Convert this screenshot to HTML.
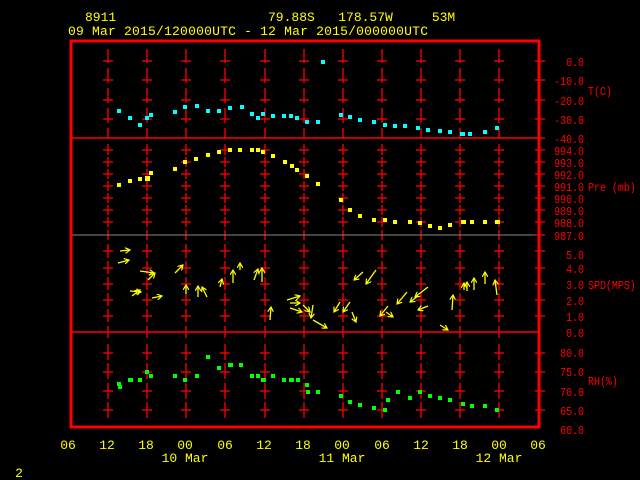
<!DOCTYPE html>
<html><head><meta charset="utf-8"><style>
html,body{margin:0;padding:0;background:#000;width:640px;height:480px;overflow:hidden}
svg{display:block}
text{font-family:"Liberation Mono",monospace;font-size:13px}
.s text{font-size:12px}
</style></head><body>
<svg width="640" height="480" viewBox="0 0 640 480" xmlns="http://www.w3.org/2000/svg">
<defs>
<marker id="ah" markerWidth="6" markerHeight="6" refX="5" refY="3" orient="auto" markerUnits="userSpaceOnUse">
<path d="M0,0 L5,3 L0,6" fill="none" stroke="#ff0" stroke-width="1.2"/></marker>
<g id="col" stroke="#f00" stroke-width="1.3">
<line x1="0" y1="49" x2="0" y2="63"/><line x1="0" y1="68" x2="0" y2="83"/><line x1="0" y1="88" x2="0" y2="103"/><line x1="0" y1="108" x2="0" y2="123"/><line x1="0" y1="128" x2="0" y2="138"/>
<line x1="-5" y1="61" x2="5" y2="61"/><line x1="-5" y1="80" x2="5" y2="80"/><line x1="-5" y1="100" x2="5" y2="100"/><line x1="-5" y1="119" x2="5" y2="119"/>
<line x1="0" y1="144" x2="0" y2="155"/><line x1="0" y1="157" x2="0" y2="167"/><line x1="0" y1="169" x2="0" y2="179"/><line x1="0" y1="181" x2="0" y2="191"/><line x1="0" y1="193" x2="0" y2="203"/><line x1="0" y1="205" x2="0" y2="215"/><line x1="0" y1="217" x2="0" y2="227"/><line x1="0" y1="230" x2="0" y2="235"/>
<line x1="-5" y1="150" x2="5" y2="150"/><line x1="-5" y1="162" x2="5" y2="162"/><line x1="-5" y1="174" x2="5" y2="174"/><line x1="-5" y1="186" x2="5" y2="186"/><line x1="-5" y1="198" x2="5" y2="198"/><line x1="-5" y1="210" x2="5" y2="210"/><line x1="-5" y1="222" x2="5" y2="222"/>
<line x1="0" y1="235" x2="0" y2="240"/><line x1="0" y1="244" x2="0" y2="258"/><line x1="0" y1="261" x2="0" y2="274"/><line x1="0" y1="277" x2="0" y2="290"/><line x1="0" y1="293" x2="0" y2="306"/><line x1="0" y1="309" x2="0" y2="322"/><line x1="0" y1="326" x2="0" y2="332"/>
<line x1="-5" y1="251" x2="5" y2="251"/><line x1="-5" y1="268" x2="5" y2="268"/><line x1="-5" y1="284" x2="5" y2="284"/><line x1="-5" y1="300" x2="5" y2="300"/><line x1="-5" y1="316" x2="5" y2="316"/>
<line x1="0" y1="332" x2="0" y2="338"/><line x1="0" y1="344" x2="0" y2="360"/><line x1="0" y1="363" x2="0" y2="379"/><line x1="0" y1="383" x2="0" y2="399"/><line x1="0" y1="402" x2="0" y2="418"/>
<line x1="-5" y1="353" x2="5" y2="353"/><line x1="-5" y1="372" x2="5" y2="372"/><line x1="-5" y1="391" x2="5" y2="391"/><line x1="-5" y1="410" x2="5" y2="410"/>
</g>
</defs>
<g fill="#ff0">
<text x="85" y="21">8911</text>
<text x="268" y="21" xml:space="preserve">79.88S   178.57W     53M</text>
<text x="68" y="35" textLength="360">09 Mar 2015/120000UTC - 12 Mar 2015/000000UTC</text>
</g>
<use href="#col" x="108"/><use href="#col" x="147"/><use href="#col" x="186"/><use href="#col" x="225"/><use href="#col" x="265"/><use href="#col" x="304"/><use href="#col" x="343"/><use href="#col" x="382"/><use href="#col" x="421"/><use href="#col" x="460"/><use href="#col" x="499"/>
<g stroke="#f00" stroke-width="1.5">
<line x1="70" y1="138" x2="540" y2="138"/>
<line x1="70" y1="332" x2="540" y2="332"/>
</g>
<line x1="70" y1="235" x2="540" y2="235" stroke="#888" stroke-width="1"/>
<rect x="71" y="41" width="468" height="386" fill="none" stroke="#f00" stroke-width="3"/>
<g stroke="#f00" stroke-width="1.3">
<line x1="535" y1="61" x2="545" y2="61"/><line x1="535" y1="80" x2="545" y2="80"/><line x1="535" y1="100" x2="545" y2="100"/><line x1="535" y1="119" x2="545" y2="119"/><line x1="535" y1="138" x2="545" y2="138"/>
<line x1="535" y1="150" x2="545" y2="150"/><line x1="535" y1="162" x2="545" y2="162"/><line x1="535" y1="174" x2="545" y2="174"/><line x1="535" y1="186" x2="545" y2="186"/><line x1="535" y1="198" x2="545" y2="198"/><line x1="535" y1="210" x2="545" y2="210"/><line x1="535" y1="222" x2="545" y2="222"/><line x1="535" y1="235" x2="545" y2="235"/>
<line x1="535" y1="251" x2="545" y2="251"/><line x1="535" y1="268" x2="545" y2="268"/><line x1="535" y1="284" x2="545" y2="284"/><line x1="535" y1="300" x2="545" y2="300"/><line x1="535" y1="316" x2="545" y2="316"/>
<line x1="535" y1="353" x2="545" y2="353"/><line x1="535" y1="372" x2="545" y2="372"/><line x1="535" y1="391" x2="545" y2="391"/><line x1="535" y1="410" x2="545" y2="410"/>
</g>
<g class="s" fill="#f00" text-anchor="end" transform="translate(584,0) scale(0.83,1)">
<text x="0" y="66">0.0</text><text x="0" y="85">-10.0</text><text x="0" y="105">-20.0</text><text x="0" y="124">-30.0</text><text x="0" y="143">-40.0</text>
<text x="0" y="155">994.0</text><text x="0" y="167">993.0</text><text x="0" y="179">992.0</text><text x="0" y="191">991.0</text><text x="0" y="203">990.0</text><text x="0" y="215">989.0</text><text x="0" y="227">988.0</text><text x="0" y="240">987.0</text>
<text x="0" y="259">5.0</text><text x="0" y="273">4.0</text><text x="0" y="289">3.0</text><text x="0" y="305">2.0</text><text x="0" y="321">1.0</text><text x="0" y="337">0.0</text>
<text x="0" y="357">80.0</text><text x="0" y="376">75.0</text><text x="0" y="396">70.0</text><text x="0" y="415">65.0</text><text x="0" y="434">60.0</text>
</g>
<g class="s" fill="#f00" transform="translate(588,0) scale(0.83,1)">
<text x="0" y="95">T(C)</text><text x="0" y="191">Pre (mb)</text><text x="0" y="289">SPD(MPS)</text><text x="0" y="385">RH(%)</text>
</g>
<g fill="#ff0" text-anchor="middle">
<text x="68" y="449">06</text><text x="107" y="449">12</text><text x="146" y="449">18</text><text x="185" y="449">00</text><text x="225" y="449">06</text><text x="264" y="449">12</text><text x="303" y="449">18</text><text x="342" y="449">00</text><text x="382" y="449">06</text><text x="421" y="449">12</text><text x="460" y="449">18</text><text x="499" y="449">00</text><text x="538" y="449">06</text>
<text x="185" y="462">10 Mar</text><text x="342" y="462">11 Mar</text><text x="499" y="462">12 Mar</text>
<text x="19" y="477">2</text>
</g>
<g fill="#0ff">
<rect x="117" y="109" width="4" height="4"/><rect x="128" y="116" width="4" height="4"/><rect x="138" y="123" width="4" height="4"/><rect x="145" y="116" width="4" height="4"/><rect x="149" y="113" width="4" height="4"/><rect x="173" y="110" width="4" height="4"/><rect x="183" y="105" width="4" height="4"/><rect x="195" y="104" width="4" height="4"/><rect x="206" y="109" width="4" height="4"/><rect x="217" y="109" width="4" height="4"/><rect x="228" y="106" width="4" height="4"/><rect x="240" y="105" width="4" height="4"/><rect x="250" y="112" width="4" height="4"/><rect x="256" y="116" width="4" height="4"/><rect x="261" y="112" width="4" height="4"/><rect x="271" y="114" width="4" height="4"/><rect x="282" y="114" width="4" height="4"/><rect x="289" y="114" width="4" height="4"/><rect x="295" y="116" width="4" height="4"/><rect x="305" y="120" width="4" height="4"/><rect x="316" y="120" width="4" height="4"/>
<rect x="321" y="60" width="4" height="4"/><rect x="339" y="113" width="4" height="4"/><rect x="348" y="115" width="4" height="4"/><rect x="358" y="118" width="4" height="4"/><rect x="372" y="120" width="4" height="4"/><rect x="383" y="123" width="4" height="4"/><rect x="393" y="124" width="4" height="4"/><rect x="403" y="124" width="4" height="4"/><rect x="416" y="126" width="4" height="4"/><rect x="426" y="128" width="4" height="4"/><rect x="438" y="129" width="4" height="4"/><rect x="448" y="130" width="4" height="4"/><rect x="460" y="132" width="5" height="4"/><rect x="468" y="132" width="4" height="4"/><rect x="483" y="130" width="4" height="4"/><rect x="495" y="126" width="4" height="4"/>
</g>
<g fill="#ff0">
<rect x="117" y="183" width="4" height="4"/><rect x="128" y="179" width="4" height="4"/><rect x="138" y="177" width="4" height="4"/><rect x="145" y="176" width="5" height="5"/><rect x="149" y="171" width="4" height="4"/><rect x="173" y="167" width="4" height="4"/><rect x="183" y="160" width="4" height="4"/><rect x="194" y="157" width="4" height="4"/><rect x="206" y="153" width="4" height="4"/><rect x="217" y="150" width="4" height="4"/><rect x="228" y="148" width="4" height="4"/><rect x="238" y="148" width="4" height="4"/><rect x="250" y="148" width="4" height="4"/><rect x="256" y="148" width="4" height="4"/><rect x="261" y="150" width="4" height="4"/><rect x="271" y="154" width="4" height="4"/><rect x="283" y="160" width="4" height="4"/><rect x="290" y="164" width="4" height="4"/><rect x="295" y="168" width="4" height="4"/><rect x="305" y="174" width="4" height="4"/><rect x="316" y="182" width="4" height="4"/>
<rect x="339" y="198" width="4" height="4"/><rect x="348" y="208" width="4" height="4"/><rect x="358" y="214" width="4" height="4"/><rect x="372" y="218" width="4" height="4"/><rect x="383" y="218" width="4" height="4"/><rect x="393" y="220" width="4" height="4"/><rect x="408" y="220" width="4" height="4"/><rect x="418" y="221" width="4" height="4"/><rect x="428" y="224" width="4" height="4"/><rect x="438" y="226" width="4" height="4"/><rect x="448" y="223" width="4" height="4"/><rect x="461" y="220" width="5" height="4"/><rect x="470" y="220" width="4" height="4"/><rect x="483" y="220" width="4" height="4"/><rect x="495" y="220" width="5" height="4"/>
</g>
<g fill="#0f0">
<rect x="117" y="382" width="4" height="4"/><rect x="118" y="385" width="4" height="4"/><rect x="128" y="378" width="5" height="4"/><rect x="138" y="378" width="4" height="4"/><rect x="145" y="370" width="4" height="4"/><rect x="149" y="374" width="4" height="4"/><rect x="173" y="374" width="4" height="4"/><rect x="183" y="378" width="4" height="4"/><rect x="195" y="374" width="4" height="4"/><rect x="206" y="355" width="4" height="4"/><rect x="217" y="366" width="4" height="4"/><rect x="228" y="363" width="5" height="4"/><rect x="239" y="363" width="4" height="4"/><rect x="250" y="374" width="4" height="4"/><rect x="256" y="374" width="4" height="4"/><rect x="261" y="378" width="5" height="4"/><rect x="271" y="374" width="4" height="4"/><rect x="282" y="378" width="4" height="4"/><rect x="289" y="378" width="5" height="4"/><rect x="296" y="378" width="4" height="4"/><rect x="305" y="383" width="4" height="4"/><rect x="306" y="390" width="4" height="4"/><rect x="316" y="390" width="4" height="4"/>
<rect x="339" y="394" width="4" height="4"/><rect x="348" y="400" width="4" height="4"/><rect x="358" y="403" width="4" height="4"/><rect x="372" y="406" width="4" height="4"/><rect x="383" y="408" width="4" height="4"/><rect x="386" y="398" width="4" height="4"/><rect x="396" y="390" width="4" height="4"/><rect x="408" y="396" width="4" height="4"/><rect x="418" y="390" width="4" height="4"/><rect x="428" y="394" width="4" height="4"/><rect x="438" y="396" width="4" height="4"/><rect x="448" y="398" width="4" height="4"/><rect x="461" y="402" width="4" height="4"/><rect x="470" y="404" width="4" height="4"/><rect x="483" y="404" width="4" height="4"/><rect x="495" y="408" width="4" height="4"/>
</g>
<g stroke="#ff0" stroke-width="1.3" marker-end="url(#ah)">
<line x1="120" y1="251" x2="130" y2="250"/><line x1="118" y1="263" x2="129" y2="260"/><line x1="140" y1="271" x2="154" y2="273"/><line x1="148" y1="280" x2="155" y2="273"/><line x1="130" y1="291" x2="141" y2="292"/><line x1="132" y1="296" x2="140" y2="290"/><line x1="152" y1="298" x2="162" y2="296"/><line x1="175" y1="273" x2="183" y2="265"/><line x1="186" y1="294" x2="186" y2="285"/><line x1="198" y1="297" x2="198" y2="286"/><line x1="207" y1="297" x2="202" y2="287"/><line x1="220" y1="287" x2="222" y2="279"/><line x1="233" y1="283" x2="233" y2="270"/><line x1="240" y1="270" x2="240" y2="263"/><line x1="254" y1="280" x2="258" y2="269"/><line x1="262" y1="282" x2="262" y2="268"/><line x1="270" y1="320" x2="271" y2="307"/><line x1="287" y1="300" x2="300" y2="296"/><line x1="290" y1="303" x2="300" y2="303"/><line x1="290" y1="308" x2="302" y2="312"/><line x1="303" y1="305" x2="310" y2="312"/><line x1="313" y1="305" x2="311" y2="318"/><line x1="313" y1="320" x2="327" y2="328"/>
<line x1="363" y1="272" x2="354" y2="280"/><line x1="376" y1="270" x2="366" y2="284"/><line x1="340" y1="302" x2="334" y2="312"/><line x1="350" y1="302" x2="343" y2="312"/><line x1="352" y1="312" x2="356" y2="322"/><line x1="388" y1="306" x2="380" y2="316"/><line x1="386" y1="312" x2="393" y2="317"/><line x1="407" y1="292" x2="397" y2="304"/><line x1="418" y1="296" x2="410" y2="302"/><line x1="428" y1="287" x2="415" y2="297"/><line x1="428" y1="306" x2="418" y2="310"/><line x1="452" y1="310" x2="453" y2="295"/><line x1="464" y1="290" x2="464" y2="283"/><line x1="467" y1="291" x2="467" y2="282"/><line x1="474" y1="290" x2="474" y2="278"/><line x1="485" y1="284" x2="485" y2="272"/><line x1="497" y1="295" x2="495" y2="280"/><line x1="440" y1="325" x2="448" y2="330"/>
</g>
</svg>
</body></html>
